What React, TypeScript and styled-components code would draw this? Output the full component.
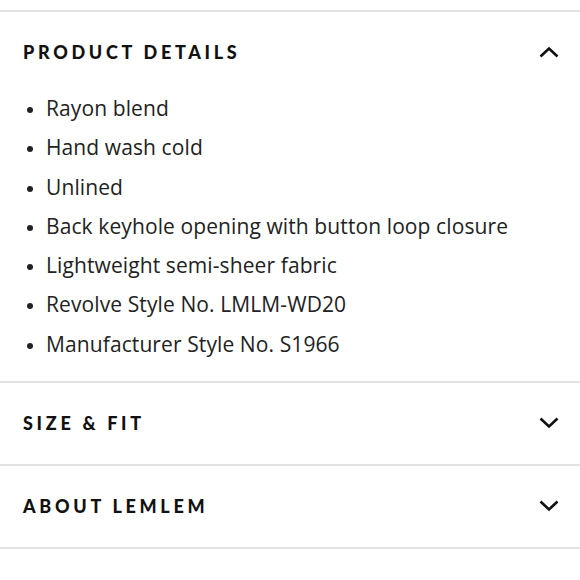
import React, { useState } from 'react';
import styled, { createGlobalStyle } from 'styled-components';

const GlobalStyle = createGlobalStyle`
  body {
    margin: 0;
    background: #fff;
    font-family: 'Open Sans', sans-serif;
  }
`;

const details = [
    'Rayon blend',
    'Hand wash cold',
    'Unlined',
    'Back keyhole opening with button loop closure',
    'Lightweight semi-sheer fabric',
    'Revolve Style No. LMLM-WD20',
    'Manufacturer Style No. S1966',
];

const Chevron = ({up}: {up?: boolean}) => (
    <svg width="20" height="12" viewBox="0 0 20 12" fill="none">
        <path d={up ? 'M1.5 10.5 L10 2.5 L18.5 10.5' : 'M1.5 1.5 L10 9.5 L18.5 1.5'}
              stroke="#111" strokeWidth="2.6"/>
    </svg>
);

const Section = ({title, open, onToggle, children}: {
    title: string,
    open: boolean,
    onToggle: () => void,
    children?: React.ReactNode,
}) => (
    <SectionStyled>
        <Header onClick={onToggle} $open={open}>
            <Title>{title}</Title>
            <Chevron up={open}/>
        </Header>
        {open && children}
    </SectionStyled>
);

export default function App() {
    const [openId, setOpenId] = useState<string | null>('details');
    const toggle = (id: string) => setOpenId(openId === id ? null : id);

    return (
        <Page>
            <GlobalStyle/>
            <Accordion>
                <Section title={'Product Details'} open={openId === 'details'} onToggle={() => toggle('details')}>
                    <List>
                        {details.map(d => <Item key={d}>{d}</Item>)}
                    </List>
                </Section>
                <Section title={'Size & Fit'} open={openId === 'size'} onToggle={() => toggle('size')}/>
                <Section title={'About Lemlem'} open={openId === 'about'} onToggle={() => toggle('about')}/>
            </Accordion>
        </Page>
    );
}

const Page = styled.div`
  width: 580px;
  height: 580px;
  padding-top: 10px;
  box-sizing: border-box;
  overflow: hidden;
`

const Accordion = styled.div`
  border-top: 2px solid #e2e2e2;
`

const SectionStyled = styled.div`
  border-bottom: 2px solid #e2e2e2;
`

const Header = styled.div<{ $open: boolean }>`
  height: ${p => p.$open ? '80px' : '81px'};
  padding: 0 21px 0 23px;
  display: flex;
  align-items: center;
  justify-content: space-between;
  cursor: pointer;
`

const Title = styled.h3`
  margin: 0;
  font-family: 'Lato', sans-serif;
  font-weight: 900;
  font-size: 18px;
  letter-spacing: 3.7px;
  text-transform: uppercase;
  color: #111;
`

const List = styled.ul`
  margin: 0;
  padding: 0 0 21px 46px;
  display: flex;
  flex-direction: column;
  gap: 7.3px;
`

const Item = styled.li`
  font-family: 'Open Sans', sans-serif;
  font-size: 21px;
  line-height: 32px;
  letter-spacing: 0.1px;
  color: #222;

  &::marker {
    font-size: 17px;
  }
`
